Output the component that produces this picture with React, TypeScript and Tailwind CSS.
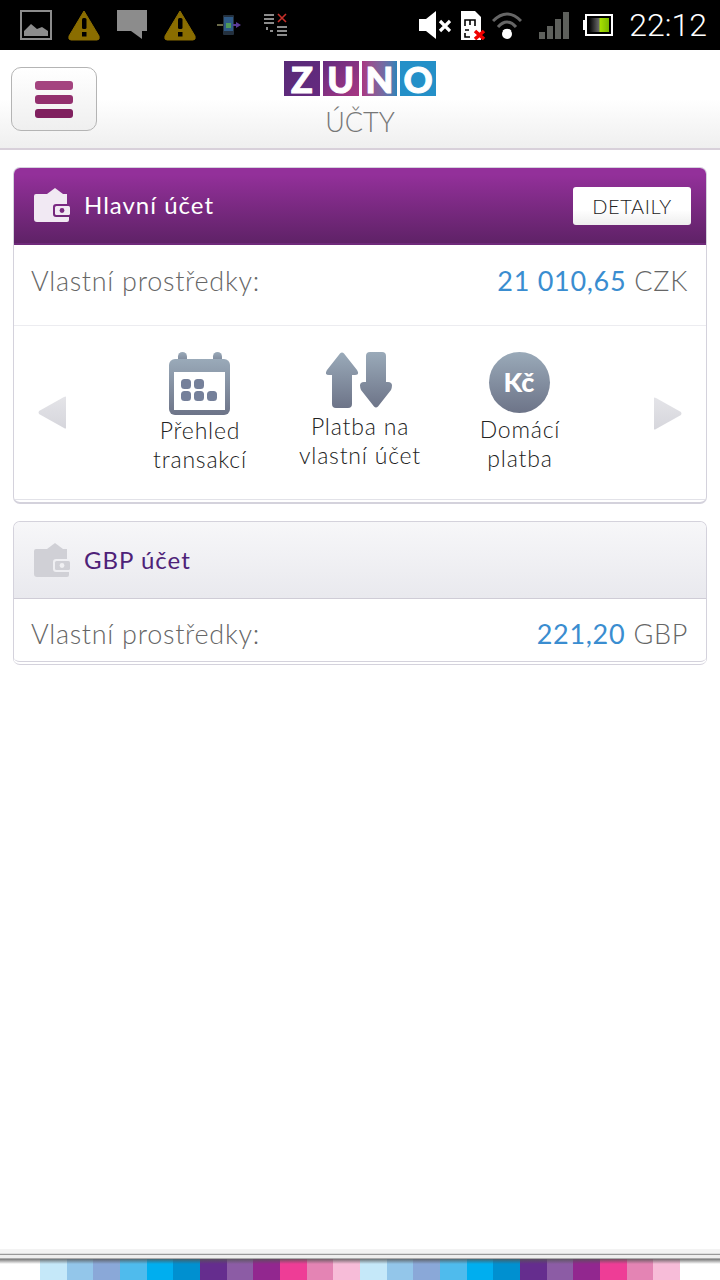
const stripeColors = [
  'bg-[#c5e8f9]', 'bg-[#93c6ea]', 'bg-[#8aa8d8]', 'bg-[#4fbbed]', 'bg-[#00aeef]', 'bg-[#0090d0]',
  'bg-[#652d8e]', 'bg-[#8c5ca5]', 'bg-[#92278f]', 'bg-[#ee3d96]', 'bg-[#e484b4]', 'bg-[#f7bcd8]',
];

function WarningIcon() {
  return (
    <svg width="34" height="32" viewBox="0 0 34 32">
      <path d="M17 2 L32 27 Q33 31 30 31 L4 31 Q1 31 2 27 Z" fill="#8a6d00" stroke="#8a6d00" strokeWidth="1" strokeLinejoin="round" />
      <rect x="15" y="9" width="4.5" height="11" rx="1.5" fill="#000" />
      <rect x="15" y="23" width="4.5" height="4.5" fill="#000" />
    </svg>
  );
}

function StatusBar() {
  return (
    <div className="flex h-[50px] items-center bg-black pl-[20px] pr-[13px]">
      {/* picture */}
      <svg width="32" height="30" viewBox="0 0 32 30">
        <rect x="1" y="1" width="30" height="28" fill="none" stroke="#8c8c8c" strokeWidth="2" />
        <path d="M4 26 V21 L11 14 L17 19 L22 17 L28 21 V26 Z" fill="#8c8c8c" />
      </svg>
      <div className="ml-[15px]"><WarningIcon /></div>
      {/* chat */}
      <svg className="ml-[16px]" width="30" height="30" viewBox="0 0 30 30">
        <path d="M0 0 H30 V21 H25 V29 L14 21 H0 Z" fill="#8c8c8c" />
      </svg>
      <div className="ml-[16px]"><WarningIcon /></div>
      {/* sync device */}
      <svg className="ml-[19px]" width="25" height="20" viewBox="0 0 25 20">
        <rect x="7" y="0" width="11" height="20" rx="1" fill="#24313f" />
        <rect x="8" y="2" width="9" height="14" fill="#2f5a86" />
        <rect x="10" y="8" width="5" height="5" fill="#4f9a5a" />
        <path d="M1 10 H7" stroke="#6b6b4a" strokeWidth="2" />
        <path d="M17 10 H22" stroke="#5a3a96" strokeWidth="2" />
        <path d="M20 7 L25 10 L20 13 Z" fill="#5a3a96" />
      </svg>
      {/* list with cross */}
      <svg className="ml-[23px]" width="24" height="24" viewBox="0 0 24 24">
        <g fill="#8c8c8c">
          <rect x="0" y="1" width="10" height="2" />
          <rect x="0" y="5" width="10" height="2" />
          <rect x="0" y="9" width="10" height="2" />
          <rect x="2" y="14" width="2" height="3" />
          <rect x="6" y="17" width="3" height="2" />
          <rect x="13" y="13" width="10" height="2" />
          <rect x="13" y="17" width="10" height="2" />
          <rect x="13" y="21" width="10" height="2" />
        </g>
        <path d="M14 1 L22 9 M22 1 L14 9" stroke="#c8302a" strokeWidth="1.6" />
      </svg>
      <div className="flex-1" />
      {/* muted speaker */}
      <svg width="32" height="28" viewBox="0 0 32 28">
        <path d="M0 8 H7 L17 0 V28 L7 20 H0 Z" fill="#fff" />
        <path d="M21 10 L31 20 M31 10 L21 20" stroke="#fff" strokeWidth="3.2" />
      </svg>
      {/* sim */}
      <svg className="ml-[10px]" width="25" height="29" viewBox="0 0 25 29">
        <path d="M0 0 H14 L20 6 V29 H0 Z" fill="#fff" />
        <path d="M4 15 V9 H14 V15 M9 9 V14 M4 19 H8 M4 22 V26 H9" stroke="#000" strokeWidth="1.6" fill="none" />
        <path d="M14 20 L23 28 M23 20 L14 28" stroke="#f00000" strokeWidth="3.6" />
      </svg>
      {/* wifi */}
      <svg className="ml-[6px]" width="30" height="28" viewBox="0 0 30 28">
        <path d="M1 10 Q15 -4 29 10" stroke="#666" strokeWidth="3" fill="none" />
        <path d="M6 16 Q15 6 24 16" stroke="#666" strokeWidth="3" fill="none" />
        <path d="M11 20 Q15 17 19 20" stroke="#ddd" strokeWidth="1.5" fill="none" />
        <circle cx="15" cy="23" r="5" fill="#fff" />
      </svg>
      {/* signal */}
      <svg className="ml-[17px]" width="30" height="27" viewBox="0 0 30 27">
        <g fill="#5e605c">
          <rect x="0" y="20" width="6" height="7" />
          <rect x="8" y="14" width="6" height="13" />
          <rect x="16" y="7" width="6" height="20" />
          <rect x="24" y="0" width="6" height="27" />
        </g>
      </svg>
      {/* battery */}
      <svg className="ml-[14px]" width="30" height="22" viewBox="0 0 30 22">
        <defs>
          <linearGradient id="batt" x1="0" x2="1" y1="0" y2="0">
            <stop offset="0" stopColor="#000" />
            <stop offset="0.5" stopColor="#6a6a6a" />
            <stop offset="0.55" stopColor="#a8e000" />
            <stop offset="1" stopColor="#7cb800" />
          </linearGradient>
        </defs>
        <rect x="0" y="6" width="3" height="10" fill="#fff" />
        <rect x="3" y="1" width="26" height="20" fill="#000" stroke="#fff" strokeWidth="2" />
        <rect x="6" y="4" width="20" height="14" fill="url(#batt)" />
      </svg>
      <span className="ml-[16px] font-['Roboto',sans-serif] text-[32px] font-light leading-none text-white">22:12</span>
    </div>
  );
}

function Logo() {
  const tile = "flex h-[35px] w-[35.750px] items-center justify-center font-['Lato',sans-serif] text-[36px] font-black leading-none text-white [-webkit-text-stroke:1px_white]";
  return (
    <div className="flex gap-[3px]">
      <div className={`${tile} bg-gradient-to-br from-[#572a77] to-[#662a80]`}>Z</div>
      <div className={`${tile} bg-gradient-to-br from-[#64297f] to-[#a83783]`}>U</div>
      <div className={`${tile} bg-gradient-to-r from-[#a83783] to-[#2a82b8]`}>N</div>
      <div className={`${tile} bg-[#2490c8]`}>O</div>
    </div>
  );
}

function Header() {
  return (
    <div className="relative flex h-[100px] flex-col items-center border-b-2 border-[#d8d0da] bg-gradient-to-b from-white from-50% to-[#efefef] pt-[11px]">
      <button className="absolute left-[11px] top-[17px] flex h-[64px] w-[86px] flex-col items-center justify-center gap-[5px] rounded-[10px] border border-[#b4b4b4] bg-gradient-to-b from-white to-[#efefef]">
        <span className="h-[9px] w-[38px] rounded-[3px] bg-[#a4447f]" />
        <span className="h-[9px] w-[38px] rounded-[3px] bg-[#93306e]" />
        <span className="h-[9px] w-[38px] rounded-[3px] bg-[#80205f]" />
      </button>
      <Logo />
      <div className="mt-[10px] text-[27px] font-light leading-[32px] text-[#777]">ÚČTY</div>
    </div>
  );
}

function Wallet({ body, hole }: { body: string; hole: string }) {
  return (
    <svg width="36" height="34" viewBox="0 0 36 34">
      <path d="M13 6 L21 0 L29 6 Z" fill={body} />
      <path d="M2 6 H33 V16 H22 Q19 16 19 19 V26 Q19 29 22 29 H35 V32 Q35 34 33 34 H3 Q0 34 0 31 V8 Q0 6 2 6 Z" fill={body} />
      <rect x="21" y="18" width="15" height="9" rx="1.5" fill={body} />
      <circle cx="28" cy="22.5" r="2.4" fill={hole} />
    </svg>
  );
}

function BalanceRow({ amount, currency, className }: { amount: string; currency: string; className: string }) {
  return (
    <div className={`flex items-center justify-between pl-[17px] pr-[18px] text-[27px] font-light leading-none tracking-[0.7px] text-[#666] ${className}`}>
      <span>Vlastní prostředky:</span>
      <span>
        <span className="font-normal text-[#3a8dd0]">{amount}</span> {currency}
      </span>
    </div>
  );
}

function CalendarIcon() {
  return (
    <svg width="62" height="64" viewBox="0 0 62 64">
      <defs>
        <linearGradient id="cal" x1="0" x2="0" y1="0" y2="1">
          <stop offset="0" stopColor="#9aaab9" />
          <stop offset="1" stopColor="#6d7488" />
        </linearGradient>
      </defs>
      <rect x="9" y="0" width="9" height="14" rx="4.5" fill="url(#cal)" />
      <rect x="44" y="0" width="9" height="14" rx="4.5" fill="url(#cal)" />
      <rect x="0" y="7" width="61" height="56" rx="6" fill="url(#cal)" />
      <rect x="5" y="20" width="51" height="38" fill="#fff" />
      <g fill="#75809a">
        <rect x="12" y="27" width="10" height="10" rx="3.5" />
        <rect x="25" y="27" width="10" height="10" rx="3.5" />
        <rect x="12" y="39" width="10" height="10" rx="3.5" />
        <rect x="25" y="39" width="10" height="10" rx="3.5" />
        <rect x="38" y="39" width="10" height="10" rx="3.5" />
      </g>
    </svg>
  );
}

function ArrowsIcon() {
  return (
    <svg className="-ml-[2px]" width="66" height="56" viewBox="0 0 66 56">
      <defs>
        <linearGradient id="arr" x1="0" x2="0" y1="0" y2="1">
          <stop offset="0" stopColor="#9aaab9" />
          <stop offset="1" stopColor="#6d7488" />
        </linearGradient>
      </defs>
      <path d="M14 1.500 Q16 -0.500 18 1.500 L31 18 Q34 23 29 23 H26 V52 Q26 56 22 56 H10 Q6 56 6 52 V23 H3 Q-2 23 1 18 Z" fill="url(#arr)" />
      <path d="M48 54.500 Q50 56.500 52 54.500 L65 38 Q68 30 62 30 H60 V4 Q60 0 56 0 H44 Q40 0 40 4 V30 H38 Q32 30 35 38 Z" fill="url(#arr)" />
    </svg>
  );
}

function ShortcutItem({ icon, lines, iconH, textClass }: { icon: React.ReactNode; lines: string[]; iconH: string; textClass: string }) {
  return (
    <div className="flex w-[160px] flex-col items-center">
      <div className={`flex items-start justify-center ${iconH}`}>{icon}</div>
      <div className={`text-center text-[23px] font-light leading-[29px] tracking-[0.8px] text-[#222] ${textClass}`}>
        {lines.map((l) => (
          <div key={l}>{l}</div>
        ))}
      </div>
    </div>
  );
}

function Carousel() {
  return (
    <div className="flex h-[175px] items-start border-y border-t-[#ececf0] border-b-[#e2e2e8] pl-[24px] pr-[24px] pt-[26px]">
      <svg className="mt-[44px]" width="28" height="33" viewBox="0 0 28 33">
        <defs>
          <linearGradient id="tri" x1="0" x2="0" y1="0" y2="1">
            <stop offset="0" stopColor="#e4e4e8" />
            <stop offset="1" stopColor="#d6d6dc" />
          </linearGradient>
        </defs>
        <path d="M28 1 V32 Q28 33 26 32 L1 18 Q0 16.500 1 15 L26 1 Q28 0 28 1 Z" fill="url(#tri)" />
      </svg>
      <div className="ml-[54px] flex">
        <ShortcutItem icon={<CalendarIcon />} lines={['Přehled', 'transakcí']} iconH="h-[64px]" textClass="" />
        <ShortcutItem icon={<ArrowsIcon />} lines={['Platba na', 'vlastní účet']} iconH="h-[60px]" textClass="leading-[28px]" />
        <ShortcutItem
          icon={
            <div className="-ml-[2px] flex h-[61px] w-[61px] items-center justify-center rounded-full bg-gradient-to-b from-[#9aaab9] to-[#6d7488] font-['Lato',sans-serif] text-[27px] font-black text-white">
              Kč
            </div>
          }
          lines={['Domácí', 'platba']}
          iconH="h-[63px]"
          textClass=""
        />
      </div>
      <div className="flex-1" />
      <svg className="mt-[45px]" width="28" height="33" viewBox="0 0 28 33">
        <path d="M0 1 V32 Q0 33 2 32 L27 18 Q28 16.500 27 15 L2 1 Q0 0 0 1 Z" fill="url(#tri)" />
      </svg>
    </div>
  );
}

export default function App() {
  return (
    <div className="flex h-[1280px] flex-col overflow-hidden bg-white font-['Lato',sans-serif]">
      <StatusBar />
      <Header />
      <main className="flex flex-col gap-[17px] px-[13px] pt-[17px]">
        {/* Main account */}
        <section className="h-[337px] overflow-hidden rounded-[7px] border border-[#d4d2dc] border-b-[2px]">
          <div className="-mx-px -mt-px flex h-[78px] items-center border-b-2 border-[#6f2a7a] bg-gradient-to-b from-[#93309a] from-10% to-[#5f2267] pl-[21px] pr-[16px]">
            <Wallet body="#f1e9f3" hole="#7a2a80" />
            <span className="ml-[14px] text-[24px] leading-none tracking-[1px] text-white">Hlavní účet</span>
            <div className="flex-1" />
            <button className="mt-[2px] flex h-[38px] w-[118px] items-center justify-center rounded-[3px] bg-gradient-to-b from-white from-60% to-[#eeeeee] text-[20px] font-light tracking-[0.6px] text-[#222]">
              DETAILY
            </button>
          </div>
          <BalanceRow amount="21 010,65" currency="CZK" className="h-[80px] pb-[10px]" />
          <Carousel />
        </section>

        {/* GBP account */}
        <section className="h-[144px] overflow-hidden rounded-[7px] border border-[#d4d2dc] border-b-[4px] [border-bottom-style:double]">
          <div className="-mt-px flex h-[78px] items-center border-b border-[#cfccd6] bg-gradient-to-b from-[#f7f7f9] to-[#e9e9ee] pl-[20px]">
            <Wallet body="#d0d0d6" hole="#f0f0f3" />
            <span className="ml-[14px] text-[24px] leading-none tracking-[1px] text-[#4e2278]">GBP účet</span>
          </div>
          <BalanceRow amount="221,20" currency="GBP" className="h-[62px] pt-[6px]" />
        </section>
      </main>

      {/* Bottom stripe */}
      <footer className="mt-auto">
        <div className="h-[4px] bg-[#f3f3f3]" />
        <div className="h-px bg-[#dddddd]" />
        <div className="h-px bg-[#999999]" />
        <div className="h-[3px] bg-[#eeeeee]" />
        <div className="h-px bg-[#aaaaaa]" />
        <div className="relative flex h-[21px] px-[40px]">
          <div className="absolute inset-x-0 top-0 h-[5px] bg-gradient-to-b from-[#555] to-transparent opacity-80" />
          {[...stripeColors, ...stripeColors].map((c, i) => (
            <div key={i} className={`flex-1 ${c}`} />
          ))}
        </div>
      </footer>
    </div>
  );
}
